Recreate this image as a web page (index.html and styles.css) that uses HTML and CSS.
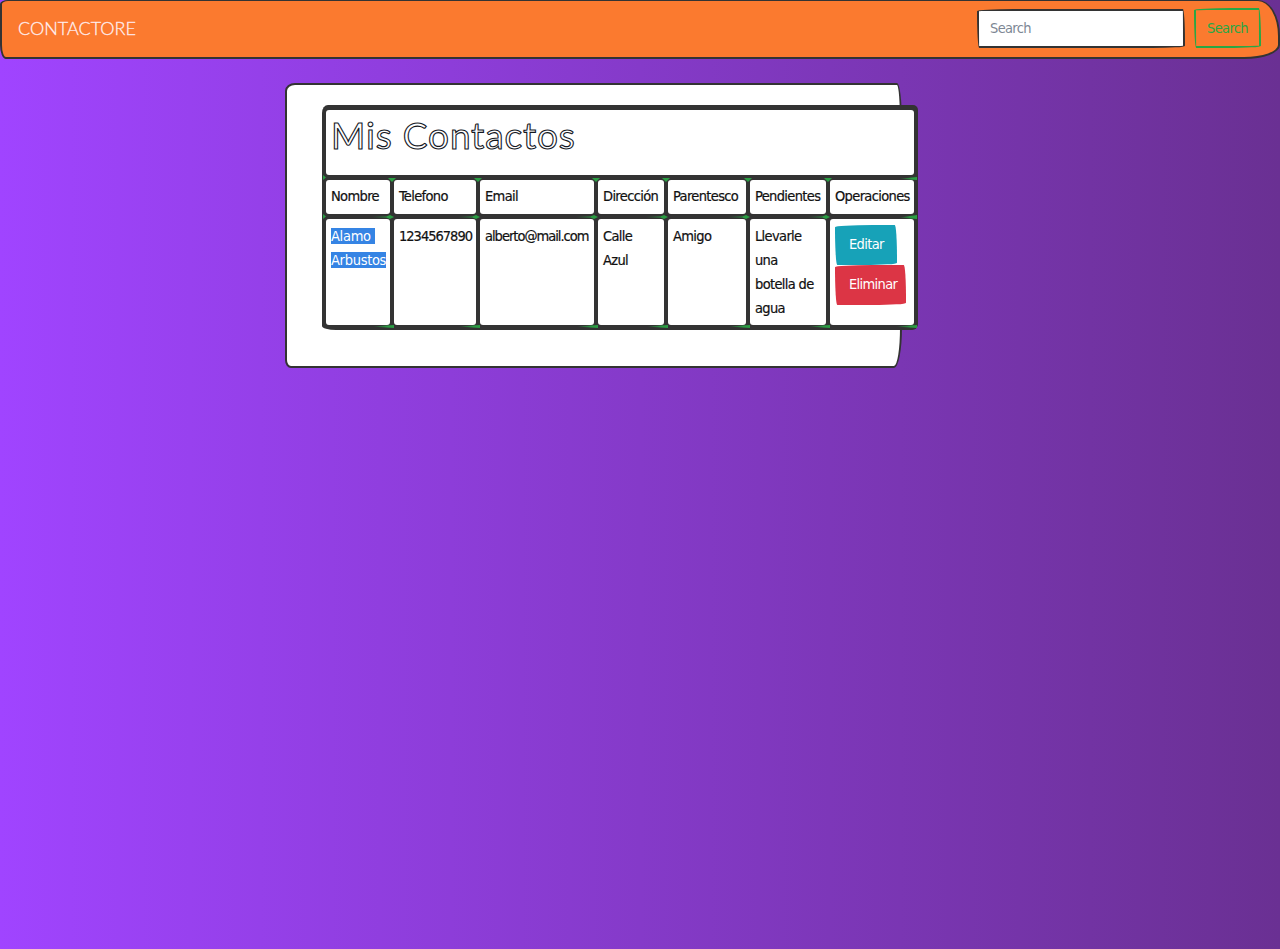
FILE: index.html
```html
<!DOCTYPE html>
<html lang="es">
<head>
<meta charset="utf-8">
<title>Contactore</title>
<link rel="stylesheet" href="styles.css">
</head>
<body>
<nav class="navbar">
  <a class="brand" href="#">CONTACTORE</a>
  <form class="search">
    <input class="search-input" type="text" placeholder="Search">
    <button class="search-btn" type="button">Search</button>
  </form>
</nav>
<main class="card">
  <table class="contacts">
    <colgroup>
      <col class="c1"><col class="c2"><col class="c3"><col class="c4"><col class="c5"><col class="c6"><col class="c7">
    </colgroup>
    <thead>
      <tr><th class="title-cell" colspan="7"><h1 class="title">Mis Contactos</h1></th></tr>
      <tr class="head">
        <th>Nombre</th><th>Telefono</th><th>Email</th><th>Dirección</th><th>Parentesco</th><th>Pendientes</th><th>Operaciones</th>
      </tr>
    </thead>
    <tbody>
      <tr class="data">
        <td><span class="sel">Alamo&nbsp;</span><br><span class="sel">Arbustos</span></td>
        <td class="tight">1234567890</td>
        <td class="tight">alberto@mail.com</td>
        <td>Calle Azul</td>
        <td>Amigo</td>
        <td>Llevarle una botella de agua</td>
        <td class="ops">
          <a class="btn btn-edit" href="#">Editar</a>
          <a class="btn btn-del" href="#">Eliminar</a>
        </td>
      </tr>
    </tbody>
  </table>
</main>
</body>
</html>
```
FILE: styles.css
```css
* { box-sizing: border-box; }
html, body { height: 100%; }
body {
  margin: 0;
  background: linear-gradient(to right, #a044ff, #6a3093);
  font-family: "DejaVu Sans Condensed", "DejaVu Sans", sans-serif;
  font-stretch: condensed;
  font-size: 14.5px;
  letter-spacing: -0.65px;
  line-height: 24px;
  color: #111;
}
.navbar {
  height: 59px;
  background: #fb7a2f;
  border: 2px solid #333;
  border-top-width: 1px;
  border-radius: 8px 22px 36px 6px / 4px 36px 14px 14px;
  display: flex;
  align-items: center;
  padding: 0 17px 2px 16px;
}
.brand {
  color: #fff;
  font-family: "Lato", sans-serif;
  font-stretch: normal;
  font-size: 18px;
  font-weight: 300;
  letter-spacing: 0;
  text-decoration: none;
  margin-right: auto;
  -webkit-text-stroke: 0.3px #fdd;
}
.search { display: flex; align-items: center; gap: 9px; }
.search-input {
  width: 208px;
  height: 39px;
  border: 2px solid #333;
  border-radius: 255px 15px 225px 15px / 15px 225px 15px 255px;
  background: #fff;
  padding: 0 11px;
  font: inherit;
  letter-spacing: inherit;
}
.search-input::placeholder { color: #7d8794; opacity: 1; }
.search-btn {
  width: 67px;
  height: 40px;
  border: 2px solid #28a745;
  border-radius: 255px 15px 225px 15px / 15px 225px 15px 255px;
  background: transparent;
  color: #28a745;
  padding: 0;
  font: inherit;
  letter-spacing: inherit;
}
.card {
  width: 617px;
  height: 285px;
  margin: 24px 0 0 285px;
  padding: 20px 35px 0;
  background: #fff;
  border: 2px solid #333;
  border-radius: 10px 5px 8px 6px / 8px 40px 40px 8px;
}
.contacts {
  table-layout: fixed;
  width: 596px;
  background: #333;
  border-collapse: separate;
  border-spacing: 4px 5px;
  border-radius: 6px 5px 6px 14px / 8px 5px 6px 4px;
  color: #111;
}
.c1 { width: 64px; }
.c2 { width: 82px; }
.c3 { width: 114px; }
.c4 { width: 66px; }
.c5 { width: 78px; }
.c6 { width: 76px; }
.c7 { width: 84px; }
th, td {
  position: relative;
  background: #fff;
  padding: 4px 5px 6px;
  border-radius: 3px;
  text-align: left;
  vertical-align: top;
  font-weight: 400;
  -webkit-text-stroke: 0.2px #111;
}
td { padding: 5px 5px 5px; }
td.tight { letter-spacing: -1px; }
.title-cell { height: 65px; }
.title {
  margin: -3px 0 0;
  font-family: "Lato", sans-serif;
  font-stretch: normal;
  font-size: 37px;
  line-height: 48px;
  font-weight: 400;
  letter-spacing: 0.85px;
  color: #fff;
  -webkit-text-stroke: 1.1px #14181f;
}
.sel {
  background: #3584e4;
  color: #fff;
  letter-spacing: -0.3px;
  -webkit-text-stroke: 0;
}
.ops { padding: 6px 0 4px 5px; }
.btn {
  display: block;
  height: 40px;
  padding: 7px 14px;
  color: #fff;
  text-decoration: none;
  -webkit-text-stroke: 0;
}
.btn-edit {
  width: 62px;
  background: #17a2b8;
  border-radius: 255px 15px 225px 15px / 15px 225px 15px 255px;
}
.btn-del {
  width: 71px;
  background: #dc3545;
  border-radius: 255px 15px 225px 15px / 15px 225px 15px 255px;
}
/* sketch-border ticks where the table's lines cross */
.head th::before,
.data td::before {
  content: "";
  position: absolute;
  top: -4px;
  right: -4px;
  width: 22px;
  height: 4px;
  background: linear-gradient(to right, rgba(42, 157, 67, 0), #2a9d43 65%);
  clip-path: polygon(0 45%, 65% 35%, 82% 0, 100% 50%, 82% 100%, 65% 65%, 0 55%);
}
.head th::before {
  width: 8px;
  height: 4px;
  top: -2px;
  right: -6px;
  background: #2a9d43;
  clip-path: polygon(0 0, 100% 0, 50% 100%);
}
.head th:last-child::before {
  width: 18px;
  height: 3px;
  top: -3px;
  right: -3px;
  background: linear-gradient(to right, rgba(42, 157, 67, 0), #2a9d43 70%);
  clip-path: polygon(0 60%, 100% 0, 100% 100%);
}
.data td:last-child::before {
  right: -3px;
  width: 18px;
  clip-path: polygon(0 60%, 100% 0, 100% 100%);
}
.head th:first-child::after,
.data td:first-child .sel:first-child::after {
  content: "";
  position: absolute;
  left: -3px;
  top: -5px;
  width: 3px;
  height: 5px;
  background: #2a9d43;
  clip-path: polygon(0 0, 100% 50%, 0 100%);
}
.data td::after {
  content: "";
  position: absolute;
  bottom: -3px;
  right: -4px;
  width: 22px;
  height: 3px;
  background: linear-gradient(to right, rgba(42, 157, 67, 0), #2a9d43 70%);
  clip-path: polygon(0 50%, 100% 0, 100% 100%);
}
.data td:last-child::after { right: -3px; }
```
